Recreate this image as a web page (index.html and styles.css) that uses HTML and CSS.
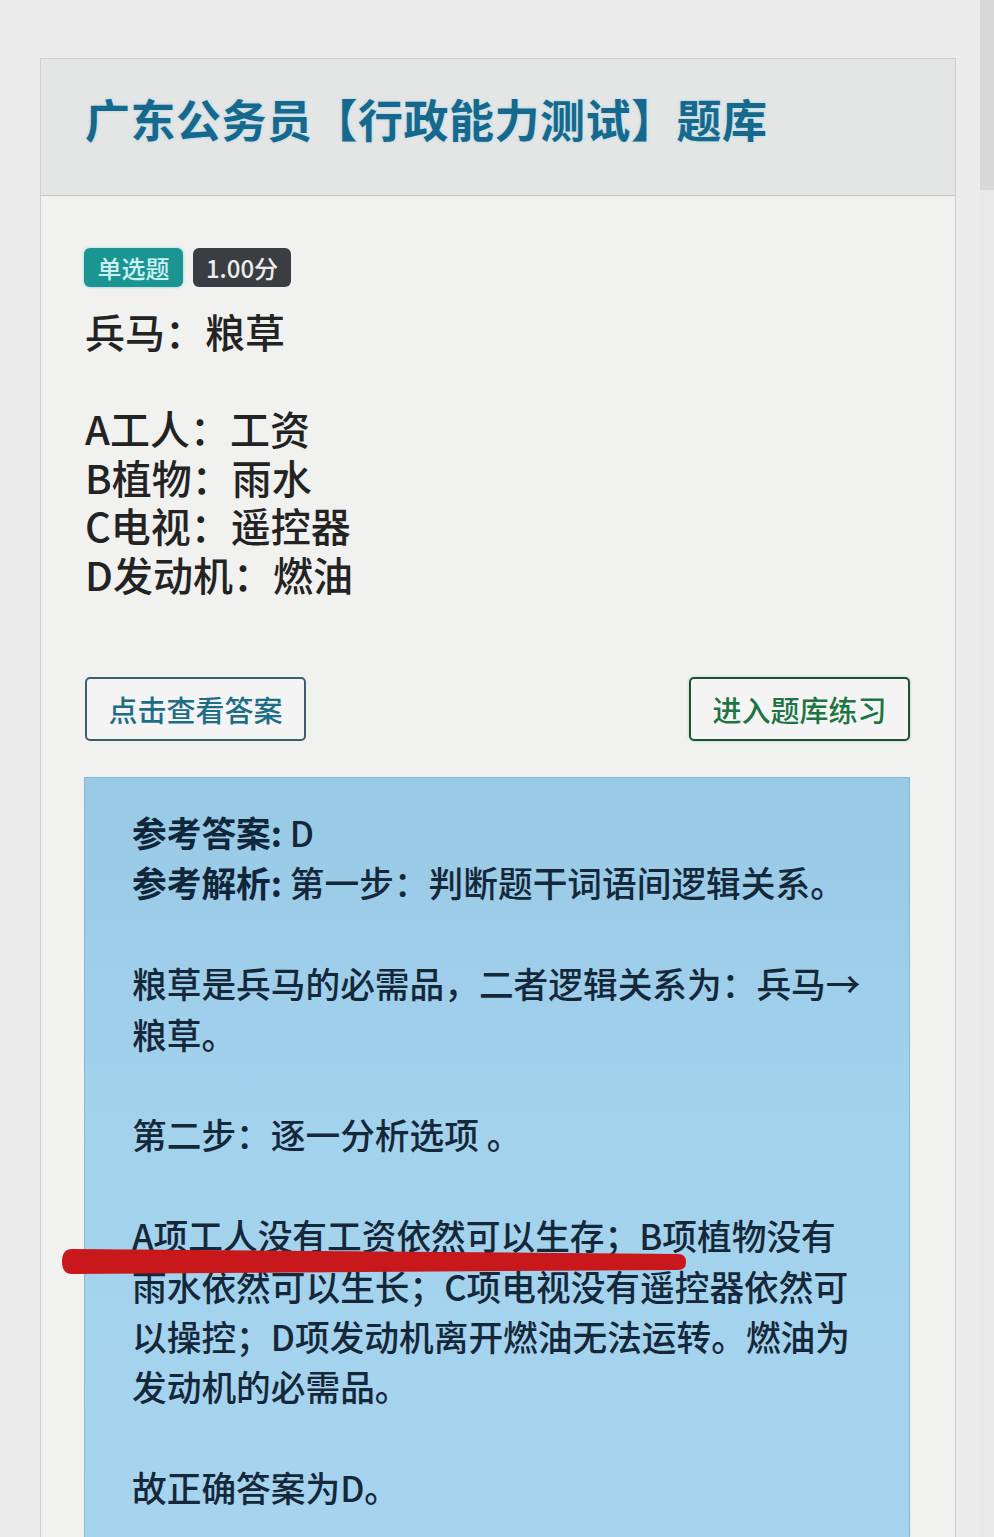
FILE: index.html
```html
<!DOCTYPE html>
<html lang="zh-CN">
<head>
<meta charset="utf-8">
<title>广东公务员【行政能力测试】题库</title>
<link rel="stylesheet" href="styles.css">
</head>
<body>
<div class="page">
  <div class="card">
    <div class="card-header">
      <h1 class="title">广东公务员【行政能力测试】题库</h1>
    </div>
    <div class="card-body">
      <div class="badges">
        <span class="badge badge-type">单选题</span>
        <span class="badge badge-score">1.00分</span>
      </div>
      <div class="question">
        <div class="stem">兵马：粮草</div>
        <div class="option">A工人：工资</div>
        <div class="option">B植物：雨水</div>
        <div class="option">C电视：遥控器</div>
        <div class="option">D发动机：燃油</div>
      </div>
      <div class="actions">
        <button class="btn btn-answer" type="button">点击查看答案</button>
        <button class="btn btn-practice" type="button">进入题库练习</button>
      </div>
      <div class="answer">
        <p><b>参考答案:</b> D<br><b>参考解析:</b> 第一步：判断题干词语间逻辑关系。</p>
        <p>粮草是兵马的必需品，二者逻辑关系为：兵马→粮草。</p>
        <p>第二步：逐一分析选项 。</p>
        <p>A项工人没有工资依然可以生存；B项植物没有雨水依然可以生长；C项电视没有遥控器依然可以操控；D项发动机离开燃油无法运转。燃油为发动机的必需品。</p>
        <p>故正确答案为D。</p>
        <svg class="mark" width="630" height="32" viewBox="0 0 630 32" aria-hidden="true">
          <path d="M12 3 L618 8 Q626 8 626 16 Q626 24 618 24 L12 28 Q2 28 2 15.5 Q2 3 12 3 Z" fill="#c8181b"/>
        </svg>
      </div>
    </div>
  </div>
  <div class="scrollbar"><div class="thumb"></div></div>
</div>
</body>
</html>
```

FILE: styles.css
```css
* { box-sizing: border-box; }

html, body {
  margin: 0;
  padding: 0;
}

body {
  background: #ececec;
  font-family: "Noto Sans CJK SC", "Noto Sans", "Liberation Sans", sans-serif;
  color: #222;
  overflow: hidden;
}

.page {
  display: flex;
  align-items: flex-start;
  padding-left: 40px;
  height: 1537px;
}

.card {
  width: 916px;
  margin-top: 58px;
  border: 1px solid #cfcfcf;
  border-bottom: none;
  background: #f1f1f0;
  height: 1479px;
}

.card-header {
  height: 137px;
  background: #e4e5e5;
  border-bottom: 1px solid #c4c6c6;
  padding: 33px 0 0 44px;
}

.title {
  margin: 0;
  font-size: 45px;
  line-height: 54px;
  font-weight: 700;
  color: #16698c;
  letter-spacing: 0.5px;
  text-shadow: 0 0 3px rgba(90, 200, 235, 0.45);
}

.card-body {
  padding: 52px 45px 0 43px;
}

.badges {
  display: flex;
  gap: 10px;
}

.badge {
  display: inline-flex;
  align-items: center;
  justify-content: center;
  height: 39px;
  width: 99px;
  border-radius: 6px;
  font-size: 24px;
  font-weight: 500;
  line-height: 1;
}

.badge-type {
  background: #1b9593;
  color: #cdeff2;
  box-shadow: 0 0 3px rgba(40, 200, 200, 0.6);
}

.badge-score {
  background: #3a3e42;
  color: #eeeeee;
  width: 98px;
}

.question {
  margin-top: 20px;
  font-size: 40px;
  line-height: 48.5px;
  font-weight: 500;
  color: #232323;
  padding-left: 1px;
}

.stem,
.option {
  height: 48.5px;
  overflow: visible;
}

.stem {
  margin-bottom: 48.5px;
}

.actions {
  display: flex;
  justify-content: space-between;
  margin-top: 79px;
  padding-left: 1px;
}

.btn {
  height: 64px;
  width: 221px;
  background: #f3f4f3;
  border-radius: 5px;
  font-family: "Noto Sans CJK SC", "Noto Sans", sans-serif;
  font-size: 29px;
  font-weight: 500;
  padding: 0;
}

.btn-answer {
  border: 2px solid #3e5e6c;
  color: #1e6d86;
}

.btn-practice {
  border: 2px solid #1f5033;
  color: #1e7442;
  box-shadow: 0 0 3px rgba(60, 180, 100, 0.4);
}

.answer {
  position: relative;
  margin-top: 36px;
  height: 780px;
  background: linear-gradient(180deg, #98c9e5 0%, #a3d2ed 45%, #a6d4ef 100%);
  border: 1px solid #86b8d4;
  border-bottom: none;
  padding: 29px 40px 0 47px;
  font-size: 34.7px;
  line-height: 50.4px;
  font-weight: 500;
  color: #15283a;
}

.answer p {
  margin: 0 0 50.4px 0;
}

.answer b {
  font-weight: 700;
  color: #10263a;
}

.mark {
  position: absolute;
  left: -25px;
  top: 468px;
}

.scrollbar {
  margin-left: auto;
  width: 14px;
  height: 1537px;
  background: #e9e9e9;
}

.thumb {
  height: 190px;
  background: #d8d8d8;
}
```
